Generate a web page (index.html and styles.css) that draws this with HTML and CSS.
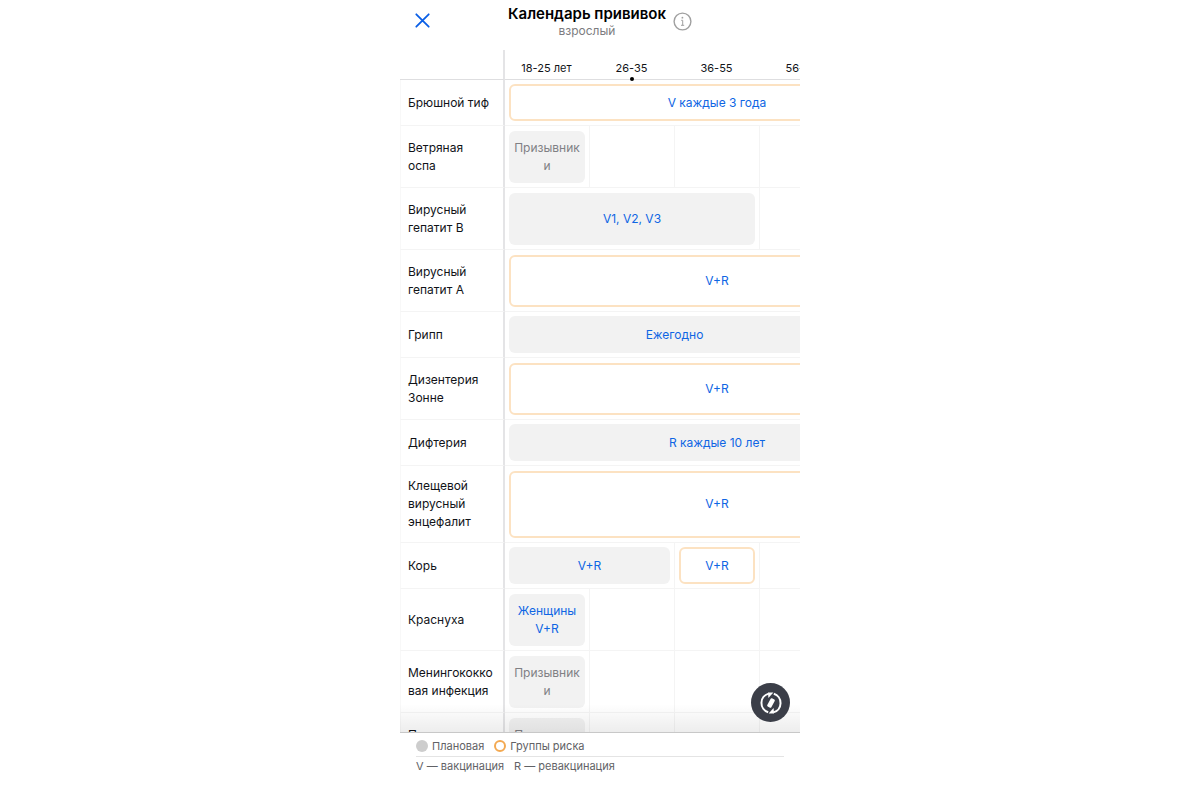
FILE: index.html
```html
<!DOCTYPE html>
<html lang="ru">
<head>
<meta charset="utf-8">
<meta name="viewport" content="width=device-width, initial-scale=1">
<title>Календарь прививок</title>
<link rel="stylesheet" href="styles.css">
</head>
<body>
<main class="screen">
  <header class="topbar">
    <button class="icon-button" type="button" aria-label="Закрыть">
      <svg width="15" height="15" viewBox="0 0 15 15" fill="none" stroke="#0a5fe6" stroke-width="1.8" stroke-linecap="round"><path d="M1.3 1.3 13.7 13.7M13.7 1.3 1.3 13.7"/></svg>
    </button>
    <div class="heading">
      <div class="titles">
        <h1 class="title">Календарь прививок</h1>
        <p class="subtitle">взрослый</p>
      </div>
      <button class="icon-button info" type="button" aria-label="Информация">
        <svg width="19" height="19" viewBox="0 0 19 19" fill="none" stroke="#a0a0a0" stroke-width="1.4"><circle cx="9.5" cy="9.5" r="8.4"/><path d="M8.2 8.3h1.5v5M8 13.3h3.2" stroke-width="1"/><circle cx="9.4" cy="5.7" r=".9" fill="#a0a0a0" stroke="none"/></svg>
      </button>
    </div>
  </header>

  <div class="board">
    <div class="scroller">
      <table class="calendar">
        <colgroup><col class="col-name"><col class="col-age" span="5"></colgroup>
        <thead>
          <tr><td class="corner"></td><th scope="col">18-25 лет</th><th scope="col" class="current">26-35</th><th scope="col">36-55</th><th scope="col">56-59</th><th scope="col">60+</th></tr>
        </thead>
        <tbody>
          <tr class="one"><th scope="row">Брюшной тиф</th><td colspan="5"><button type="button" class="dose risk">V каждые 3 года</button></td></tr>
          <tr class="two"><th scope="row">Ветряная оспа</th><td><div class="dose plain">Призывники</div></td><td></td><td></td><td></td><td></td></tr>
          <tr class="two"><th scope="row">Вирусный гепатит B</th><td colspan="3"><button type="button" class="dose">V1, V2, V3</button></td><td></td><td></td></tr>
          <tr class="two"><th scope="row">Вирусный гепатит A</th><td colspan="5"><button type="button" class="dose risk">V+R</button></td></tr>
          <tr class="one"><th scope="row">Грипп</th><td colspan="4"><button type="button" class="dose">Ежегодно</button></td><td></td></tr>
          <tr class="two"><th scope="row">Дизентерия Зонне</th><td colspan="5"><button type="button" class="dose risk">V+R</button></td></tr>
          <tr class="one"><th scope="row">Дифтерия</th><td colspan="5"><button type="button" class="dose">R каждые 10 лет</button></td></tr>
          <tr class="three"><th scope="row">Клещевой вирусный энцефалит</th><td colspan="5"><button type="button" class="dose risk">V+R</button></td></tr>
          <tr class="one"><th scope="row">Корь</th><td colspan="2"><button type="button" class="dose">V+R</button></td><td><button type="button" class="dose risk">V+R</button></td><td></td><td></td></tr>
          <tr class="two"><th scope="row">Краснуха</th><td><button type="button" class="dose">Женщины V+R</button></td><td></td><td></td><td></td><td></td></tr>
          <tr class="two"><th scope="row">Менингококко&#8203;вая инфекция</th><td><div class="dose plain">Призывники</div></td><td></td><td></td><td></td><td></td></tr>
          <tr class="two"><th scope="row">Пневмококко&#8203;вая инфекция</th><td><div class="dose plain">Призывники</div></td><td></td><td></td><td></td><td></td></tr>
        </tbody>
      </table>
    </div>
    <button class="fab" type="button" aria-label="Повернуть экран">
      <svg width="24" height="24" viewBox="0 0 24 24" fill="none" stroke="#fff" stroke-width="2"><path d="M9.2 21.2A9.7 9.7 0 0 1 9.6 2.6"/><path d="M14.8 2.8a9.7 9.7 0 0 1-.4 18.6"/><path d="M9 1.5h5.4L9.4 7z" fill="#fff" stroke="none"/><path d="M15 22.5H9.6l5-5.5z" fill="#fff" stroke="none"/><rect x="9.7" y="7.4" width="4.6" height="9.2" rx="1" transform="rotate(28 12 12)" fill="#fff" stroke="none"/></svg>
    </button>
  </div>

  <footer class="legend">
    <div class="legend-row">
      <span class="legend-item"><i class="mark"></i>Плановая</span>
      <span class="legend-item"><i class="mark mark-risk"></i>Группы риска</span>
    </div>
    <div class="legend-row legend-codes">
      <span>V — вакцинация</span>
      <span>R — ревакцинация</span>
    </div>
  </footer>
</main>
</body>
</html>
```
FILE: styles.css
```css
* { box-sizing: border-box; }
body {
  margin: 0;
  background: #fff;
  color: #111318;
  font-family: Inter, "Noto Sans", sans-serif;
  font-size: 12px;
  line-height: 18px;
}
button {
  margin: 0;
  padding: 0;
  border: 0;
  background: none;
  font: inherit;
  cursor: pointer;
}
.screen {
  display: flex;
  flex-direction: column;
  max-width: 400px;
  height: 100vh;
  margin: 0 auto;
}
.topbar {
  display: grid;
  grid-template-columns: 1fr auto 1fr;
  align-items: start;
  padding: 4px 15px 12px;
}
.icon-button {
  display: flex;
  justify-self: start;
  margin-top: 9px;
}
.heading { display: flex; gap: 7px; }
.info { margin-top: 8px; }
.titles { text-align: center; }
.title {
  margin: 0;
  font-size: 15px;
  font-weight: 600;
  line-height: 20px;
  color: #000;
}
.subtitle {
  margin: 0;
  font-size: 12px;
  line-height: 14px;
  color: #7c7c80;
}
.board {
  position: relative;
  flex: 1;
  min-height: 0;
}
.board::after {
  content: "";
  position: absolute;
  inset: auto 0 0;
  height: 28px;
  background: linear-gradient(rgba(0, 0, 0, 0), rgba(0, 0, 0, .07));
  pointer-events: none;
}
.scroller {
  height: 100%;
  overflow: auto;
  scrollbar-width: none;
}
.calendar {
  width: 530px;
  table-layout: fixed;
  border-collapse: separate;
  border-spacing: 0;
}
.col-name { width: 105px; }
.col-age { width: 85px; }
.calendar th { font-weight: 400; }
.calendar td, .calendar th {
  padding: 0;
  border-right: 1px solid #f4f4f4;
  border-bottom: 1px solid #f4f4f4;
}
.calendar thead td, .calendar thead th {
  position: sticky;
  top: 0;
  z-index: 1;
  height: 30px;
  padding: 6px 2px 0 0;
  border-right: 0;
  border-bottom: 1px solid #dedee0;
  background: #fff;
  font-size: 11px;
}
.calendar .corner, .calendar tbody th, .calendar thead .corner {
  border-right: 2px solid #e4e4e6;
}
.current::after {
  content: "";
  position: absolute;
  left: 50%;
  bottom: -2px;
  width: 4px;
  height: 4px;
  margin-left: -3px;
  border-radius: 50%;
  background: #000;
}
.calendar tbody th {
  padding: 0 10px 0 7px;
  border-left: 1px solid #f8f8f8;
  text-align: left;
}
.calendar tbody td { padding: 0 4px; }
.one { --row: 46px; --dose: 37px; }
.two { --row: 62px; --dose: 52px; }
.three { --row: 77px; --dose: 67px; }
.calendar tbody tr { height: var(--row); }
.dose {
  display: flex;
  align-items: center;
  justify-content: center;
  width: 100%;
  height: var(--dose);
  padding: 0 3px;
  border-radius: 6px;
  background: #f2f2f2;
  color: #0f66e4;
  text-align: center;
  overflow-wrap: anywhere;
}
.risk {
  border: 2px solid #fce2c2;
  background: #fff;
}
.plain { color: #808084; }
.fab {
  position: absolute;
  right: 10px;
  bottom: 10px;
  z-index: 2;
  display: flex;
  align-items: center;
  justify-content: center;
  width: 39px;
  height: 39px;
  border-radius: 50%;
  background: #3b3e48;
}
.legend {
  padding: 4px 16px 24px;
  border-top: 1px solid #c8c8c8;
  color: #626266;
  font-size: 11px;
}
.legend-row {
  display: flex;
  gap: 10px;
  padding-bottom: 1px;
}
.legend-codes { border-top: 1px solid #e4e4e4; }
.legend-item {
  display: flex;
  align-items: center;
  gap: 4px;
}
.mark {
  width: 12px;
  height: 12px;
  border-radius: 50%;
  background: #cdcdcd;
}
.mark-risk {
  border: 2px solid #f3a952;
  background: #fff;
}
```
